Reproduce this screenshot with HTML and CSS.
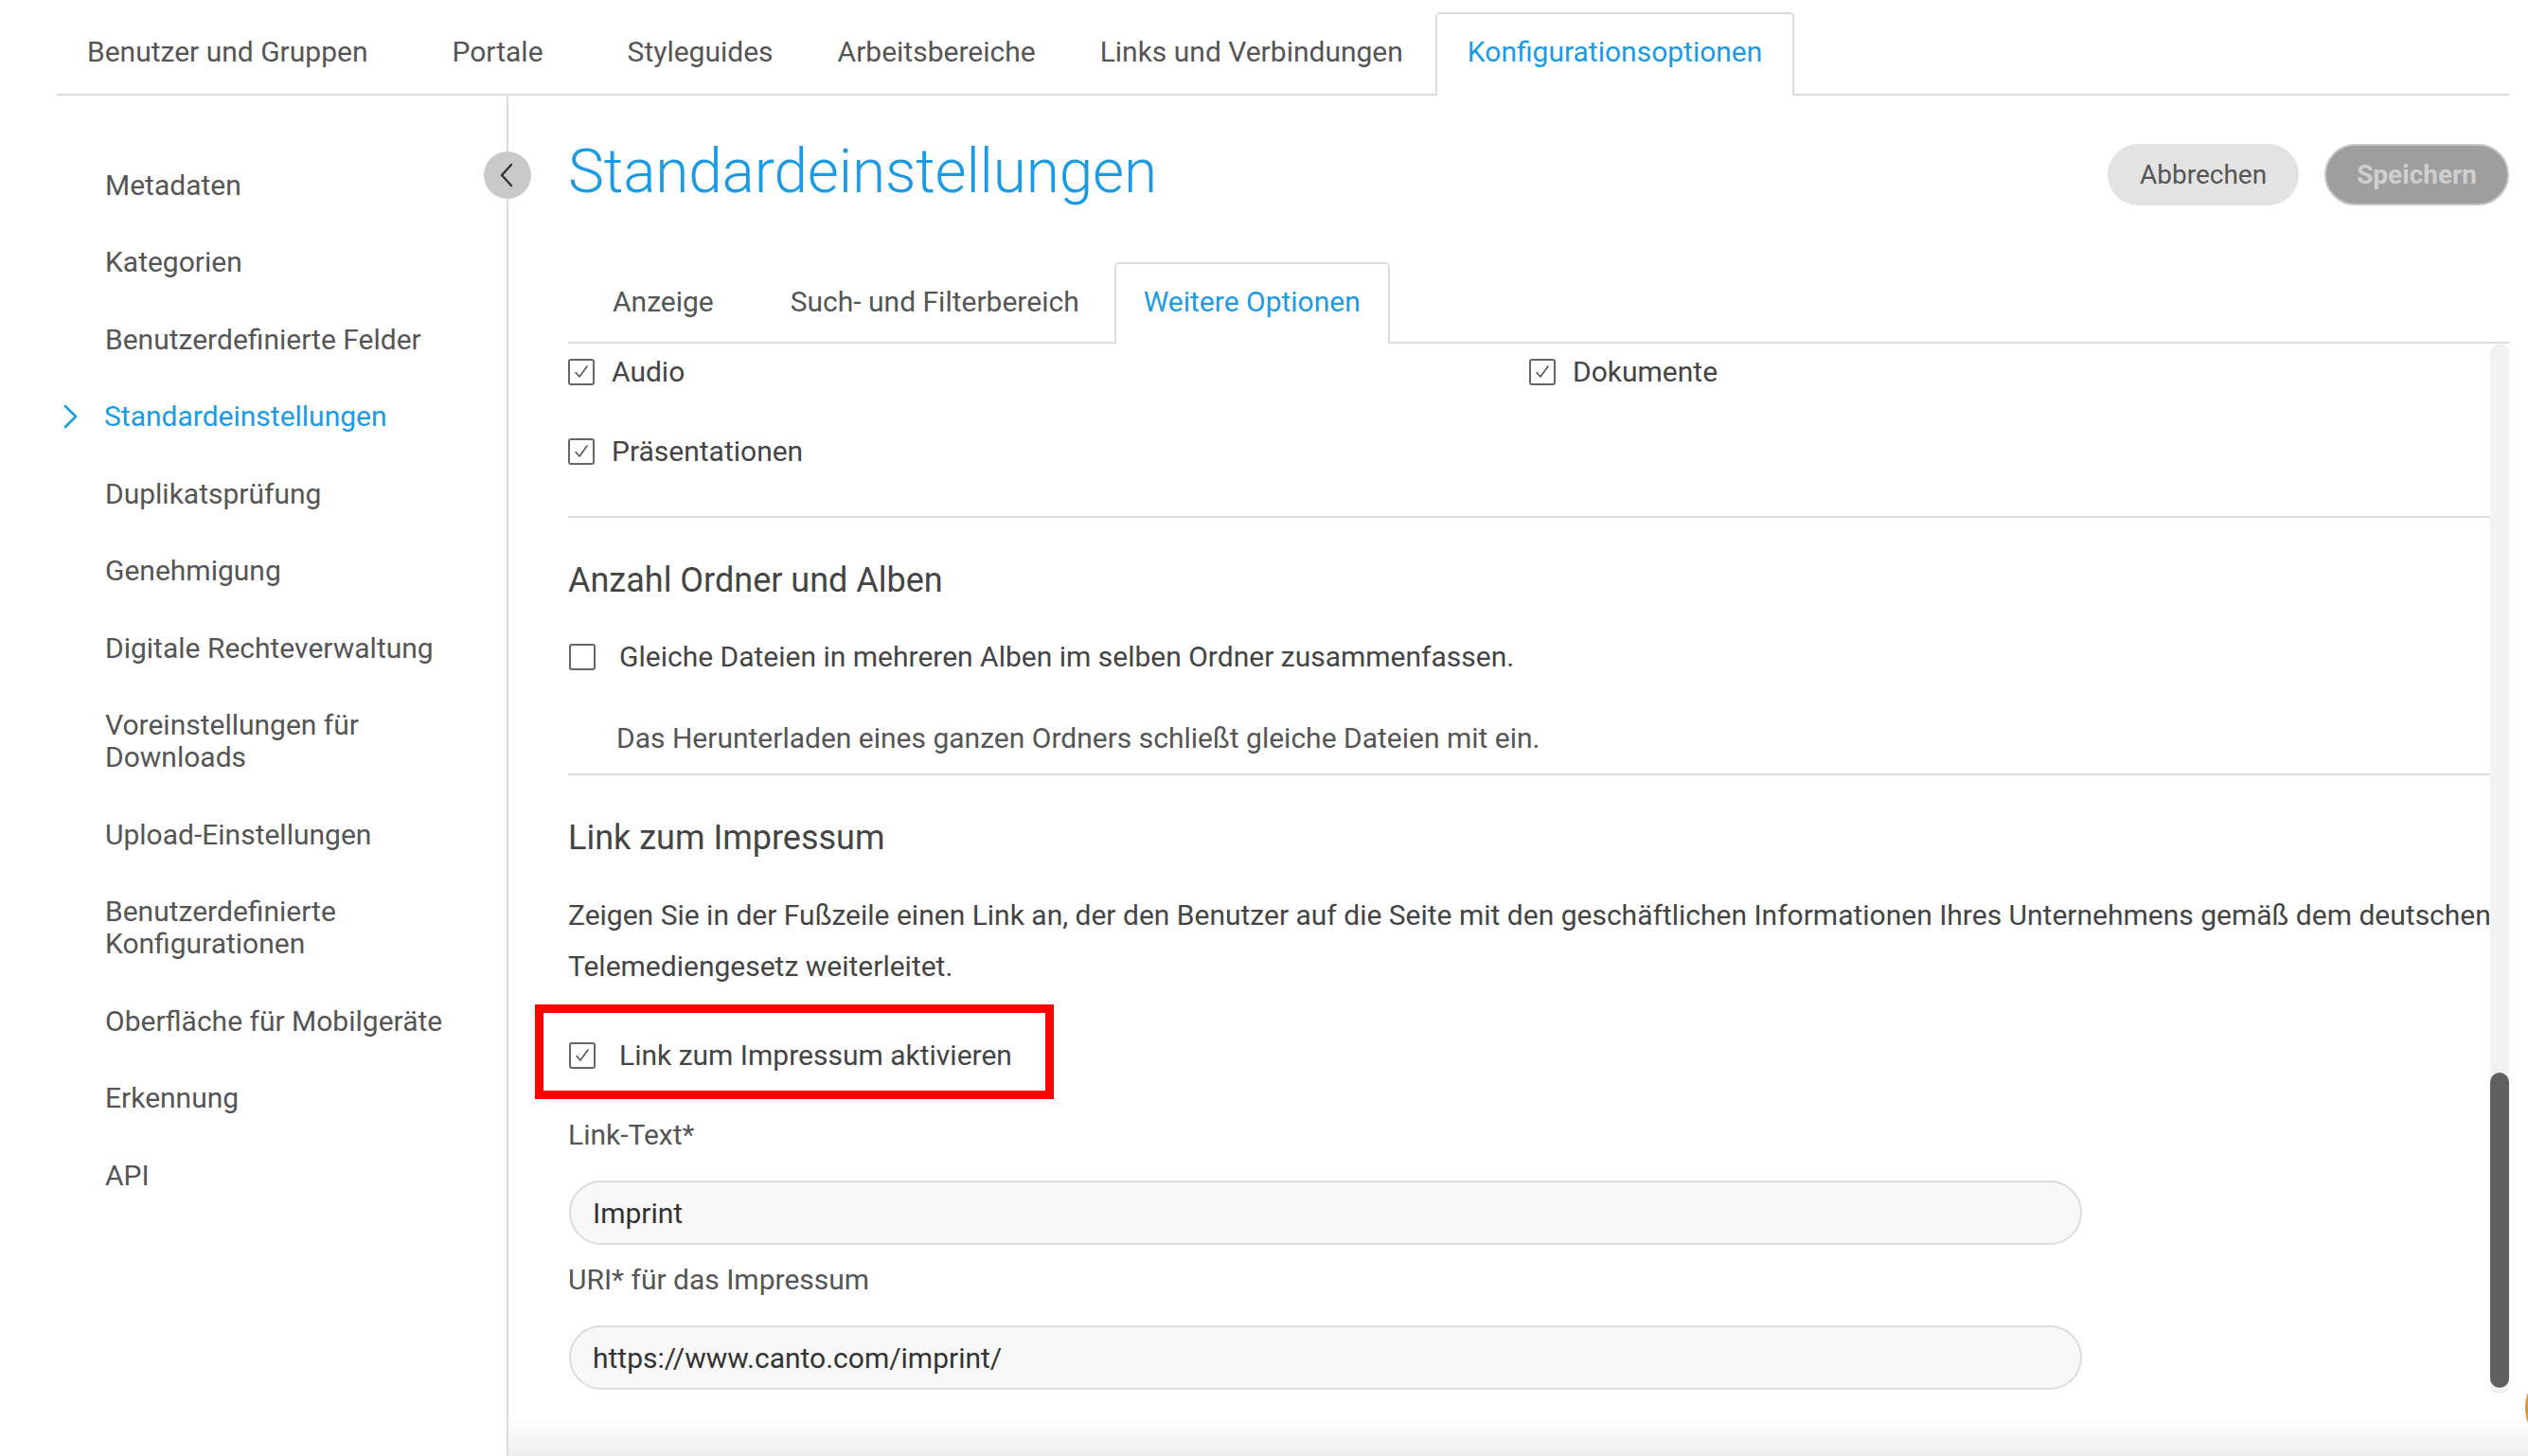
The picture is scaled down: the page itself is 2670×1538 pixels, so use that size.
FILE: index.html
```html
<!DOCTYPE html>
<html lang="de">
<head>
  <meta charset="UTF-8" />
  <meta name="viewport" content="width=device-width, initial-scale=1.0" />
  <title>Konfigurationsoptionen - Standardeinstellungen</title>
  <link rel="stylesheet" href="styles.css">
</head>
<body>
  <!-- top level tabs -->
  <nav class="topnav">
    <a class="toptab wide">Benutzer und Gruppen</a>
    <a class="toptab wide">Portale</a>
    <a class="toptab">Styleguides</a>
    <a class="toptab">Arbeitsbereiche</a>
    <a class="toptab">Links und Verbindungen</a>
    <a class="toptab active">Konfigurationsoptionen</a>
  </nav>

  <div class="layout">
    <aside class="sidebar">
      <button class="collapse" title="Einklappen">
        <svg width="14" height="26" viewBox="0 0 14 26"><polyline points="12,2 2,13 12,24" fill="none" stroke="#333" stroke-width="2.4" stroke-linecap="round" stroke-linejoin="round"/></svg>
      </button>
      <ul class="sidenav">
        <li>Metadaten</li>
        <li>Kategorien</li>
        <li>Benutzerdefinierte Felder</li>
        <li class="active">
          <svg class="chev" width="16" height="26" viewBox="0 0 16 26"><polyline points="3,2 14,13 3,24" fill="none" stroke="#1b9ae6" stroke-width="2.6" stroke-linecap="round" stroke-linejoin="round"/></svg>
          <span>Standardeinstellungen</span>
        </li>
        <li>Duplikatsprüfung</li>
        <li>Genehmigung</li>
        <li>Digitale Rechteverwaltung</li>
        <li>Voreinstellungen für Downloads</li>
        <li>Upload-Einstellungen</li>
        <li>Benutzerdefinierte Konfigurationen</li>
        <li>Oberfläche für Mobilgeräte</li>
        <li>Erkennung</li>
        <li>API</li>
      </ul>
    </aside>

    <main class="main">
      <header class="head">
        <h1>Standardeinstellungen</h1>
        <div class="actions">
          <button class="btn cancel">Abbrechen</button>
          <button class="btn save" disabled>Speichern</button>
        </div>
      </header>

      <div class="subtabs">
        <a class="subtab first">Anzeige</a>
        <a class="subtab">Such- und Filterbereich</a>
        <a class="subtab active">Weitere Optionen</a>
      </div>

      <div class="panel">
        <div class="panel-body">

          <div class="filetypes">
            <label class="check tight"><span class="box on"></span>Audio</label>
            <label class="check tight"><span class="box on"></span>Dokumente</label>
            <label class="check tight"><span class="box on"></span>Präsentationen</label>
          </div>

          <section class="group">
            <h2>Anzahl Ordner und Alben</h2>
            <label class="check row-gap"><span class="box"></span>Gleiche Dateien in mehreren Alben im selben Ordner zusammenfassen.</label>
            <p class="hint">Das Herunterladen eines ganzen Ordners schließt gleiche Dateien mit ein.</p>
          </section>

          <section class="group last">
            <h2>Link zum Impressum</h2>
            <p class="desc">Zeigen Sie in der Fußzeile einen Link an, der den Benutzer auf die Seite mit den geschäftlichen Informationen Ihres Unternehmens gemäß dem deutschen<br>Telemediengesetz weiterleitet.</p>
            <label class="check marked"><span class="box on"></span>Link zum Impressum aktivieren</label>

            <div class="field">
              <span class="field-label">Link-Text*</span>
              <input class="text-input" type="text" value="Imprint">
            </div>
            <div class="field">
              <span class="field-label">URI* für das Impressum</span>
              <input class="text-input" type="text" value="https://www.canto.com/imprint/">
            </div>
          </section>

        </div>
        <div class="scrollbar"><div class="thumb"></div></div>
      </div>

      <div class="fade"></div>
    </main>
  </div>

  <div class="help"></div>
</body>
</html>
```

FILE: styles.css
```css
:root {
  --blue: #1b9ae6;
  --text: #555;
  --text-dark: #444;
  --line: #dcdcdc;
}

html, body {
  margin: 0;
  height: 100%;
  overflow: hidden;
  background: #fff;
  color: var(--text);
  font-family: Roboto, "Liberation Sans", Arial, sans-serif;
  font-size: 30px;
}

a { cursor: pointer; }

/* top tabs */
.topnav {
  display: flex;
  align-items: flex-start;
  margin: 0 20px 0 60px;
  padding-top: 13px;
  border-bottom: 2px solid var(--line);
}
.toptab {
  box-sizing: border-box;
  height: 86px;
  line-height: 80px;
  padding: 0 32px;
  border: 2px solid transparent;
  border-bottom: 0;
  border-radius: 5px 5px 0 0;
  color: var(--text);
  white-space: nowrap;
}
.toptab:first-child { margin-left: -2px; }
.toptab.wide { margin-right: 21px; }
.toptab.active {
  height: 88px;
  margin-bottom: -2px;
  border-color: var(--line);
  background: #fff;
  color: var(--blue);
}

/* layout */
.layout {
  display: grid;
  grid-template-columns: 537px 1fr;
  height: calc(100vh - 101px);
}

.sidebar {
  position: relative;
  box-sizing: border-box;
  border-right: 2px solid var(--line);
  padding-top: 54px;
}
.collapse {
  position: absolute;
  top: 59px;
  right: -26px;
  width: 50px;
  height: 50px;
  border: 0;
  border-radius: 50%;
  background: #c9c9c9;
  display: flex;
  align-items: center;
  justify-content: center;
  padding: 0 2px 0 0;
  cursor: pointer;
}
.sidenav {
  list-style: none;
  margin: 0;
  padding: 0;
}
.sidenav li {
  display: flex;
  align-items: center;
  padding: 23.75px 40px 23.75px 111px;
  line-height: 34px;
  color: var(--text);
}
.sidenav li.active {
  padding-left: 66px;
  color: var(--blue);
}
.sidenav .chev {
  flex: none;
  margin-right: 28px;
}

/* main column */
.main {
  display: flex;
  flex-direction: column;
  padding: 0 20px 0 63px;
  min-width: 0;
}
.head {
  display: flex;
  align-items: center;
  justify-content: space-between;
  margin-top: 41px;
  height: 80px;
}
.head h1 {
  margin: 0;
  font-size: 64px;
  line-height: 80px;
  font-weight: 300;
  color: var(--blue);
  letter-spacing: -0.2px;
}
.actions {
  display: flex;
  gap: 27px;
  margin-top: 4px;
}
.btn {
  box-sizing: border-box;
  height: 65px;
  border-radius: 33px;
  font-family: inherit;
  font-size: 28px;
  cursor: pointer;
}
.btn.cancel {
  padding: 0 34px;
  border: 0;
  background: #e3e3e3;
  color: var(--text);
}
.btn.save {
  padding: 0 32px;
  border: 2px solid #c6c6c6;
  background: #9e9e9e;
  color: #cfcfcf;
  font-weight: 700;
}

/* inner tabs */
.subtabs {
  display: flex;
  align-items: flex-start;
  margin-top: 55px;
  border-bottom: 2px solid var(--line);
}
.subtab {
  box-sizing: border-box;
  height: 84px;
  line-height: 80px;
  padding: 0 29px;
  border: 2px solid transparent;
  border-bottom: 0;
  border-radius: 5px 5px 0 0;
  color: var(--text);
  white-space: nowrap;
}
.subtab.first { margin: 0 19px 0 16px; }
.subtab + .subtab { margin-right: 6px; }
.subtab.active {
  height: 86px;
  margin-bottom: -2px;
  border-color: var(--line);
  background: #fff;
  color: var(--blue);
}

/* scroll panel */
.panel {
  flex: 1;
  display: flex;
  min-height: 0;
}
.panel-body {
  flex: 1;
  min-width: 0;
  color: var(--text-dark);
}
.scrollbar {
  flex: none;
  width: 20px;
  margin-bottom: 24px;
  border-radius: 10px;
  background: #f2f2f2;
  display: flex;
  flex-direction: column;
  justify-content: flex-end;
  padding-bottom: 7px;
}
.thumb {
  height: 333px;
  border-radius: 10px;
  background: #616161;
}
.fade {
  flex: none;
  height: 41px;
  margin: 0 -20px 0 -63px;
  background: linear-gradient(#fff, #eeeeee);
}

/* checkboxes */
.check {
  display: flex;
  align-items: center;
  gap: 25px;
  height: 34px;
  line-height: 34px;
  white-space: nowrap;
}
.check.tight { gap: 18px; }
.box {
  flex: none;
  box-sizing: border-box;
  width: 28px;
  height: 28px;
  border: 2px solid #666;
  border-radius: 3px;
  background: #fff;
}
.box.on {
  background: #fff url("data:image/svg+xml;utf8,<svg xmlns='http://www.w3.org/2000/svg' width='24' height='24' viewBox='0 0 24 24'><polyline points='6,12.5 10,17 18,6' fill='none' stroke='%23555' stroke-width='1.6' stroke-linecap='round' stroke-linejoin='round'/></svg>") center / 24px 24px no-repeat;
}

.filetypes {
  display: grid;
  grid-template-columns: 1fr 1fr;
  row-gap: 50px;
  padding: 13px 0 51px;
  border-bottom: 2px solid var(--line);
}

.group {
  border-bottom: 2px solid var(--line);
  padding-bottom: 20px;
}
.group.last { border-bottom: 0; }
.group h2 {
  margin: 46px 0 0;
  font-size: 36px;
  line-height: 40px;
  font-weight: 400;
  color: var(--text-dark);
}
.group .row-gap {
  margin: 44px 0 0 1px;
}
.hint {
  margin: 52px 0 0 51px;
  line-height: 34px;
  color: var(--text);
}
.desc {
  margin: 35px 0 0;
  line-height: 54px;
  white-space: nowrap;
}

/* red highlight around the imprint switch */
.marked {
  position: relative;
  width: max-content;
  margin: 50px 0 0 1px;
}
.marked::after {
  content: "";
  position: absolute;
  left: -36px;
  top: -37px;
  right: -44px;
  bottom: -29px;
  border: 9px solid #ff0000;
}

.field {
  display: flex;
  flex-direction: column;
}
.field-label {
  margin-top: 50px;
  line-height: 34px;
  color: var(--text);
}
.field + .field .field-label { margin-top: 20px; }
.text-input {
  box-sizing: border-box;
  width: 1598px;
  height: 68px;
  margin: 31px 0 0 1px;
  padding: 0 23px;
  border: 2px solid #dddddd;
  border-radius: 34px;
  background: #f8f8f8;
  font-family: inherit;
  font-size: 30px;
  color: #333;
  outline: none;
}

/* chat/help bubble sticking in from the right edge */
.help {
  position: fixed;
  top: 1440px;
  right: -91px;
  width: 94px;
  height: 94px;
  border-radius: 50%;
  background: #e2952e;
}
```
